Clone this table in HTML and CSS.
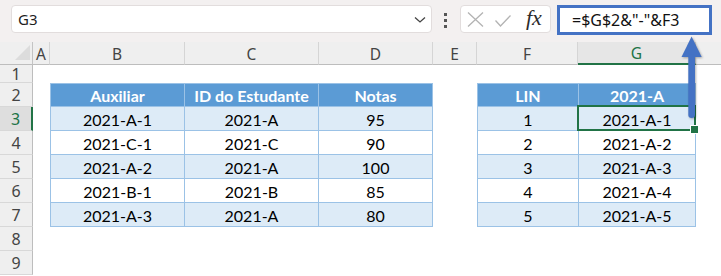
FILE: index.html
```html
<!DOCTYPE html>
<html lang="pt">
<head>
<meta charset="utf-8">
<title>Planilha</title>
<link rel="stylesheet" href="styles.css">
</head>
<body>
<div class="app">
  <header class="formula-bar">
    <div class="name-box">
      <span>G3</span>
      <svg class="chev" width="12" height="8" viewBox="0 0 12 8"><polyline points="1,1.5 6,6 11,1.5" fill="none" stroke="#444" stroke-width="1.3"/></svg>
    </div>
    <div class="grip"><i></i><i></i><i></i></div>
    <div class="fx-box">
      <svg class="ico-x" width="17" height="15" viewBox="0 0 17 15"><path d="M1 0.5 L16 14.5 M16 0.5 L1 14.5" stroke="#b3b3b3" stroke-width="1.3" fill="none"/></svg>
      <svg class="ico-ok" width="16" height="12" viewBox="0 0 16 12"><polyline points="0.5,5.5 5.5,11 15.5,0.5" fill="none" stroke="#b3b3b3" stroke-width="1.3"/></svg>
      <span class="fx">fx</span>
    </div>
    <div class="formula">=$G$2&amp;"-"&amp;F3</div>
  </header>

  <main class="sheet">
    <div class="corner"><svg width="15" height="15" viewBox="0 0 15 15"><polygon points="15,0 15,15 0,15" fill="#dcdcdc"/></svg></div>
    <div class="ch">A</div>
    <div class="ch">B</div>
    <div class="ch">C</div>
    <div class="ch">D</div>
    <div class="ch">E</div>
    <div class="ch">F</div>
    <div class="ch ch-sel">G</div>
    <div class="ch ch-last"></div>

    <div class="rows">
      <div class="rh rh-first">1</div>
      <div class="rh">2</div>
      <div class="rh rh-sel">3</div>
      <div class="rh">4</div>
      <div class="rh">5</div>
      <div class="rh">6</div>
      <div class="rh">7</div>
      <div class="rh">8</div>
      <div class="rh">9</div>
    </div>

    <div class="tbl tbl-notas">
      <div class="th">Auxiliar</div><div class="th">ID do Estudante</div><div class="th">Notas</div>
      <div class="td band">2021-A-1</div><div class="td band">2021-A</div><div class="td band">95</div>
      <div class="td">2021-C-1</div><div class="td">2021-C</div><div class="td">90</div>
      <div class="td band">2021-A-2</div><div class="td band">2021-A</div><div class="td band">100</div>
      <div class="td">2021-B-1</div><div class="td">2021-B</div><div class="td">85</div>
      <div class="td band">2021-A-3</div><div class="td band">2021-A</div><div class="td band">80</div>
    </div>

    <div class="tbl tbl-lin">
      <div class="th">LIN</div><div class="th">2021-A</div>
      <div class="td band">1</div><div class="td band active">2021-A-1</div>
      <div class="td">2</div><div class="td">2021-A-2</div>
      <div class="td band">3</div><div class="td band">2021-A-3</div>
      <div class="td">4</div><div class="td">2021-A-4</div>
      <div class="td band">5</div><div class="td band">2021-A-5</div>
    </div>
  </main>

  <!-- callout arrow from the selected cell up to the formula -->
  <svg class="callout" width="721" height="276" viewBox="0 0 721 276">
    <g fill="#4472c4">
      <polygon points="691.6,36.5 681.5,57 701.7,57"/>
      <rect x="688.3" y="54" width="6.7" height="64" rx="3.3"/>
    </g>
  </svg>
</div>
</body>
</html>
```

FILE: styles.css
```css
* {
  box-sizing: border-box;
}

body {
  margin: 0;
  background: #ffffff;
}

.app {
  position: relative;
  width: 721px;
  height: 276px;
  overflow: hidden;
  font-family: "Noto Sans", "Open Sans", sans-serif;
  color: #222;
}

/* ---------- formula bar ---------- */
.formula-bar {
  height: 42px;
  background: #f3f0f0;
  display: flex;
  align-items: flex-start;
  padding: 5px 0 0 11px;
}

.name-box {
  width: 421px;
  height: 28px;
  background: #fff;
  border: 1px solid #e2dddd;
  border-radius: 4px;
  display: flex;
  align-items: center;
  justify-content: space-between;
  padding: 0 5px 0 6px;
  font-size: 15px;
  color: #1e1e1e;
}

.chev {
  display: block;
  margin-top: 1px;
}

.grip {
  margin: 8px 0 0 12px;
  width: 4px;
  display: flex;
  flex-direction: column;
  gap: 3px;
}

.grip i {
  display: block;
  width: 3px;
  height: 3px;
  background: #555;
}

.fx-box {
  margin-left: 12px;
  width: 91px;
  height: 28px;
  background: #fff;
  border: 1px solid #e2dddd;
  border-radius: 4px;
  display: flex;
  align-items: center;
  padding-left: 6px;
}

.ico-x {
  display: block;
  margin-top: 1px;
}

.ico-ok {
  display: block;
  margin: 3px 0 0 11px;
}

.fx {
  margin-left: 15px;
  font-family: "Liberation Serif", "DejaVu Serif", serif;
  font-style: italic;
  font-size: 22px;
  color: #2b2b2b;
  line-height: 1;
  margin-top: -2px;
}

.formula {
  margin-left: 6px;
  width: 155px;
  height: 30px;
  background: #fff;
  border: 3px solid #4472c4;
  display: flex;
  align-items: center;
  padding-left: 12px;
  font-size: 16px;
  color: #111;
}

/* ---------- sheet grid ---------- */
.sheet {
  display: grid;
  grid-template-columns: 33px 17px 135px 134px 114px 44px 101px 118px 1fr;
  grid-template-rows: 23px 18px repeat(9, 24px);
}

.corner {
  background: #efefef;
  border-right: 1px solid #c4c4c4;
  border-bottom: 1px solid #bdbdbd;
  display: flex;
  align-items: flex-end;
  justify-content: flex-end;
  padding: 0 2px 4px 0;
}

.corner svg {
  display: block;
}

.ch {
  background: #efefef;
  border-right: 1px solid #d5d5d5;
  border-bottom: 1px solid #bdbdbd;
  display: flex;
  align-items: center;
  justify-content: center;
  font-size: 15.5px;
  color: #444;
  padding-top: 1px;
}

.ch-sel {
  background: #e6e6e6;
  color: #217346;
  border-bottom: 2px solid #217346;
}

.ch-last {
  border-right: none;
}

.rows {
  grid-column: 1;
  grid-row: 2 / -1;
  display: flex;
  flex-direction: column;
}

.rh {
  height: 24px;
  flex: none;
  background: #efefef;
  border-right: 1px solid #bdbdbd;
  border-bottom: 1px solid #d8d8d8;
  display: flex;
  align-items: center;
  justify-content: center;
  font-size: 16px;
  color: #444;
}

.rh-first {
  height: 18px;
}

.rh-sel {
  background: #dedede;
  color: #217346;
  border-right: 2px solid #217346;
}

/* ---------- tables ---------- */
.tbl {
  display: grid;
  grid-template-rows: 23px repeat(5, 24px);
  border-left: 1px solid #9bc2e6;
  border-top: 1px solid #9bc2e6;
  font-family: "Lato", "Noto Sans", sans-serif;
  font-size: 16px;
  color: #000;
}

.tbl-notas {
  grid-column: 3 / 6;
  grid-row: 3 / 9;
  grid-template-columns: 134px 134px 114px;
}

.tbl-lin {
  grid-column: 7 / 9;
  grid-row: 3 / 9;
  grid-template-columns: 101px 117px;
}

.th,
.td {
  display: flex;
  align-items: center;
  justify-content: center;
  border-right: 1px solid #9bc2e6;
  border-bottom: 1px solid #9bc2e6;
  white-space: nowrap;
}

.th {
  background: #5b9bd5;
  color: #fff;
  font-weight: 700;
}

.td {
  padding-top: 1px;
}

.band {
  background: #ddebf7;
}

/* selected cell outline with fill handle */
.active {
  position: relative;
}

.active::before {
  content: "";
  position: absolute;
  left: -2px;
  top: -2px;
  right: -1px;
  bottom: -1px;
  border: 2px solid #217346;
}

.active::after {
  content: "";
  position: absolute;
  right: -4px;
  bottom: -4px;
  width: 7px;
  height: 7px;
  background: #217346;
  border: 1px solid #fff;
}

/* ---------- callout arrow ---------- */
.callout {
  position: absolute;
  left: 0;
  top: 0;
  pointer-events: none;
  filter: drop-shadow(1px 1px 1px rgba(0, 0, 0, 0.3));
}
```
